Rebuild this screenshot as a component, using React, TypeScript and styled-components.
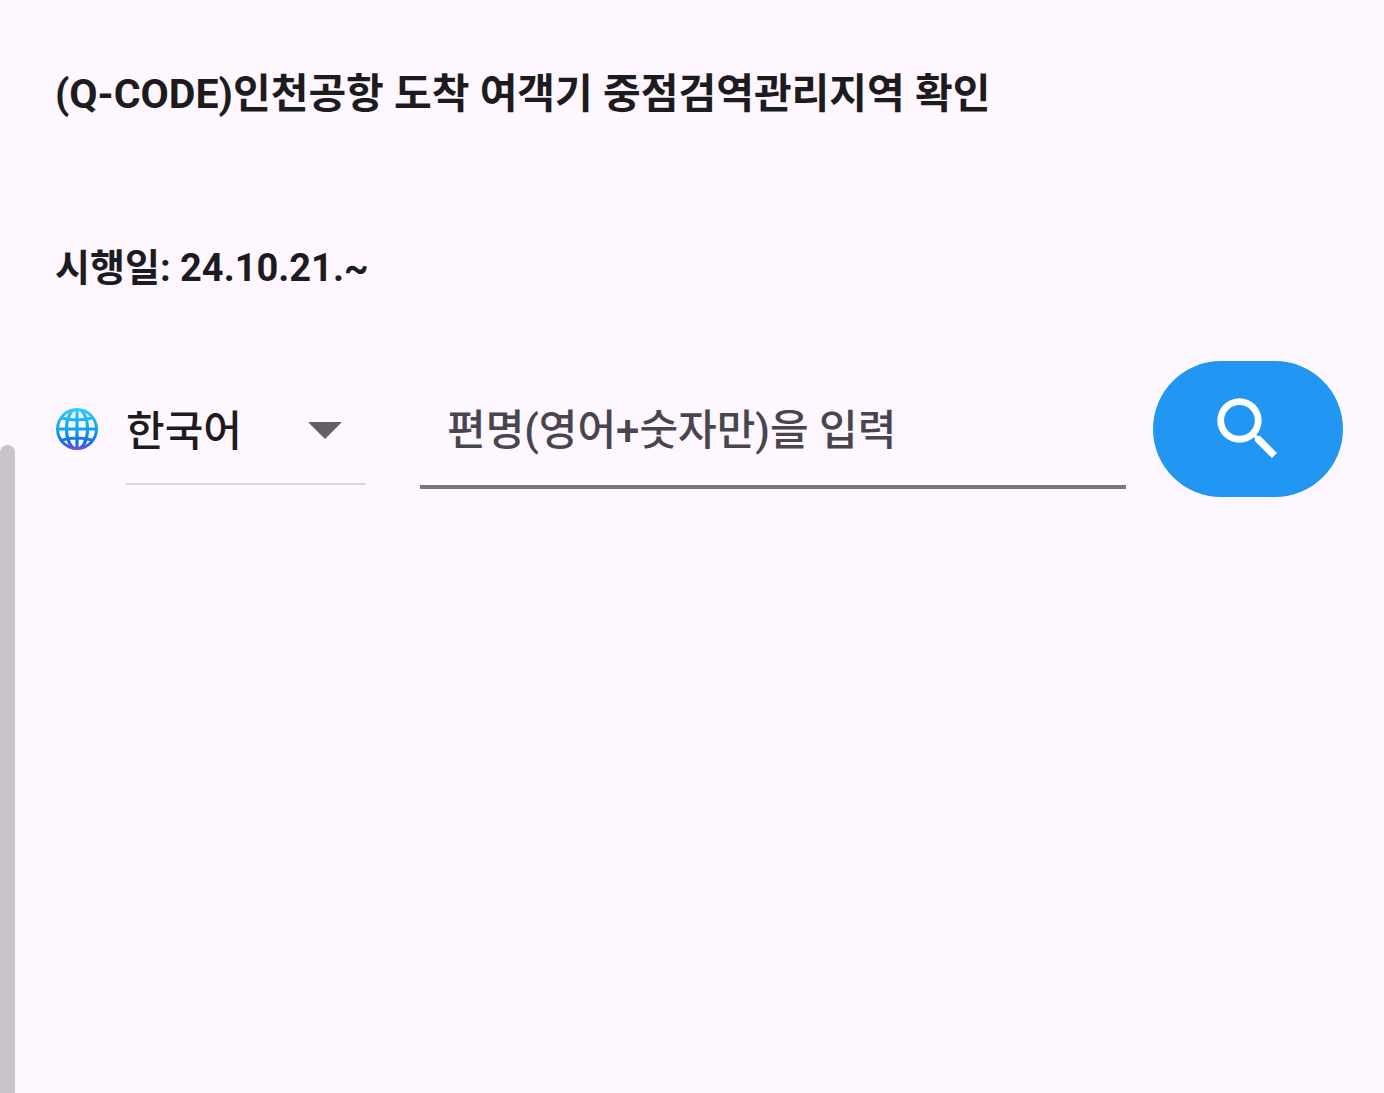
import React, { useState } from "react";
import styled, { createGlobalStyle } from "styled-components";

const GlobalStyle = createGlobalStyle`
  *, *::before, *::after { box-sizing: border-box; }
  body {
    margin: 0;
    min-height: 100vh;
    background: #fef7ff;
    color: #1d1b20;
    font-family: Roboto, "Noto Sans CJK KR", sans-serif;
  }
`;

const Page = styled.main`
  padding: 62px 41px 60px 55px;
`;

const Title = styled.h1`
  margin: 0;
  font-size: 41px;
  line-height: 64px;
  font-weight: 700;
`;

const EffectiveDate = styled.p`
  margin: 112px 0 0;
  font-size: 38px;
  line-height: 60px;
  font-weight: 700;
`;

const SearchForm = styled.form`
  display: flex;
  align-items: center;
  margin-top: 63px;
`;

const LanguageLabel = styled.label`
  display: flex;
  flex: none;
  margin-right: 27px;
`;

const SelectBox = styled.div`
  position: relative;
  flex: none;
  width: 240px;
  margin-right: 54px;
`;

const LanguageSelect = styled.select`
  display: block;
  width: 100%;
  height: 112px;
  padding: 6px 60px 0 0;
  border: 0;
  border-bottom: 2px solid #dbd5dc;
  border-radius: 0;
  appearance: none;
  background: transparent;
  color: inherit;
  font-family: inherit;
  font-size: 42px;
  font-weight: 500;
`;

const Arrow = styled.svg`
  position: absolute;
  right: 24px;
  top: 50%;
  width: 34px;
  height: 17px;
  margin-top: -7px;
  pointer-events: none;
`;

const FlightInput = styled.input`
  flex: 1;
  min-width: 0;
  height: 120px;
  margin-right: 27px;
  padding: 6px 27px 0;
  border: 0;
  border-bottom: 4px solid #7b757f;
  border-radius: 0;
  background: transparent;
  color: inherit;
  font-family: inherit;
  font-size: 42px;
  font-weight: 500;

  &::placeholder {
    color: #49454f;
    opacity: 1;
  }
`;

const SearchButton = styled.button`
  display: flex;
  flex: none;
  align-items: center;
  justify-content: center;
  width: 190px;
  height: 136px;
  padding: 0;
  border: 0;
  border-radius: 68px;
  background: #2196f3;
  color: #fff;
  cursor: pointer;
`;

const ScrollThumb = styled.div`
  position: fixed;
  left: 0;
  top: 445px;
  bottom: 0;
  width: 15px;
  border-radius: 8px 8px 0 0;
  background: #c9c3ca;
`;

const Globe = () => (
  <svg width="44" height="44" viewBox="0 0 44 44" aria-hidden="true">
    <defs>
      <linearGradient id="globe" x1="0" y1="0" x2="0" y2="1">
        <stop offset="0" stopColor="#35cdfa" />
        <stop offset="0.5" stopColor="#0ba5f5" />
        <stop offset="0.8" stopColor="#1470e6" />
        <stop offset="1" stopColor="#6d4fd8" />
      </linearGradient>
      <mask id="grid">
        <circle cx="22" cy="22" r="18" fill="#fff" />
        <g fill="none" stroke="#000" strokeWidth="3.2">
          <path d="M22 1v42M1 22h42M5 10.5q17 5 34 0M5 33.5q17-5 34 0" />
          <ellipse cx="22" cy="22" rx="10.5" ry="20" />
        </g>
      </mask>
    </defs>
    <circle cx="22" cy="22" r="21" fill="url(#globe)" />
    <rect width="44" height="44" fill="#fef7ff" mask="url(#grid)" />
  </svg>
);

export default function App() {
  const [language, setLanguage] = useState("ko");
  const [flight, setFlight] = useState("");

  return (
    <>
      <GlobalStyle />
      <Page>
        <Title>(Q-CODE)인천공항 도착 여객기 중점검역관리지역 확인</Title>
        <EffectiveDate>시행일: 24.10.21.~</EffectiveDate>
        <SearchForm onSubmit={(event) => event.preventDefault()}>
          <LanguageLabel htmlFor="language" aria-label="언어">
            <Globe />
          </LanguageLabel>
          <SelectBox>
            <LanguageSelect
              id="language"
              value={language}
              onChange={(event) => setLanguage(event.target.value)}
            >
              <option value="ko">한국어</option>
            </LanguageSelect>
            <Arrow viewBox="0 0 34 17" aria-hidden="true">
              <path d="M0 0h34L17 17z" fill="#616161" />
            </Arrow>
          </SelectBox>
          <FlightInput
            type="text"
            aria-label="편명"
            placeholder="편명(영어+숫자만)을 입력"
            value={flight}
            onChange={(event) => setFlight(event.target.value)}
          />
          <SearchButton type="submit" aria-label="검색">
            <svg width="82" height="82" viewBox="0 0 24 24" fill="currentColor" aria-hidden="true">
              <path d="M15.5 14h-.79l-.28-.27A6.471 6.471 0 0 0 16 9.5 6.5 6.5 0 1 0 9.5 16c1.61 0 3.09-.59 4.23-1.57l.27.28v.79l5 4.99L20.49 19l-4.99-5zm-6 0C7.01 14 5 11.990 5 9.5S7.010 5 9.5 5 14 7.010 14 9.5 11.990 14 9.5 14z" />
            </svg>
          </SearchButton>
        </SearchForm>
      </Page>
      <ScrollThumb />
    </>
  );
}
